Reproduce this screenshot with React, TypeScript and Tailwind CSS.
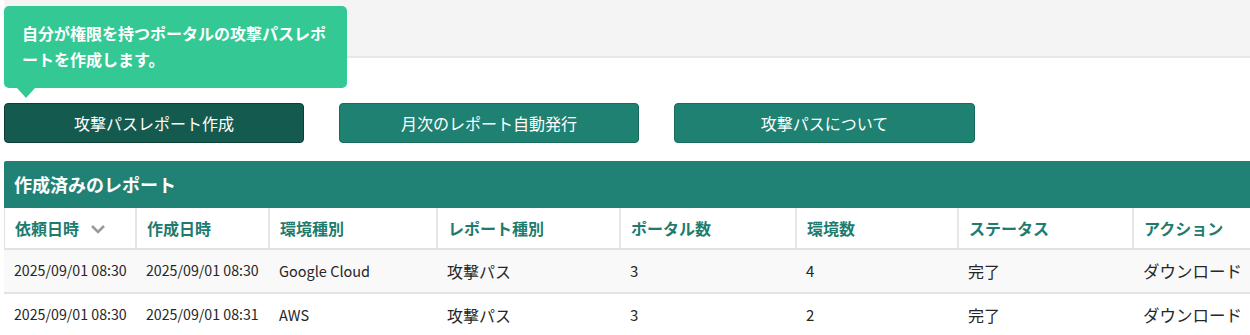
import React from "react";

const cols = [
  { label: "依頼日時", w: "w-[132px]", sort: true },
  { label: "作成日時", w: "w-[133px]" },
  { label: "環境種別", w: "w-[168px]" },
  { label: "レポート種別", w: "w-[183px]" },
  { label: "ポータル数", w: "w-[176px]" },
  { label: "環境数", w: "w-[162px]" },
  { label: "ステータス", w: "w-[175px]" },
  { label: "アクション", w: "w-[140px]" },
];

const sizes = [
  "text-[14.2px]",
  "text-[14.2px]",
  "text-[14.5px]",
  "text-[16px]",
  "text-[15px]",
  "text-[15px]",
  "text-[16px]",
  "text-[16.5px]",
];

const rows = [
  ["2025/09/01 08:30", "2025/09/01 08:30", "Google Cloud", "攻撃パス", "3", "4", "完了", "ダウンロード"],
  ["2025/09/01 08:30", "2025/09/01 08:31", "AWS", "攻撃パス", "3", "2", "完了", "ダウンロード"],
];

export default function App() {
  return (
    <div
      className="relative w-[1250px] h-[335px] overflow-hidden bg-white pl-[4px]"
      style={{ fontFamily: '"Noto Sans CJK JP", "Noto Sans", sans-serif' }}
    >
      <div className="h-[58px] bg-[#f4f4f4] border-b-2 border-[#e4e8ea]" />

      <div className="absolute left-[4px] top-[6px] w-[343px] h-[82px] rounded-[5px] bg-[#34c994] pl-[18px] pt-[14px] text-white font-bold text-[16px] leading-[26px]">
        自分が権限を持つポータルの攻撃パスレポ
        <br />
        ートを作成します。
        <div className="absolute left-[13px] top-[82px] w-0 h-0 border-l-[9px] border-r-[9px] border-t-[10px] border-l-transparent border-r-transparent border-t-[#34c994]" />
      </div>

      <div className="mt-[45px] flex gap-[35px] h-[40px]">
        <button className="w-[300px] h-[40px] rounded-[4px] bg-[#155a4e] border border-[#0e3f37] text-white text-[16px]">
          攻撃パスレポート作成
        </button>
        <button className="w-[300px] h-[40px] rounded-[4px] bg-[#1f8172] border border-[#186a5d] text-white text-[16px]">
          月次のレポート自動発行
        </button>
        <button className="w-[301px] h-[40px] rounded-[4px] bg-[#1f8172] border border-[#186a5d] text-white text-[16px]">
          攻撃パスについて
        </button>
      </div>

      <div className="mt-[18px]">
        <div className="h-[47px] bg-[#1f8274] flex items-center pl-[10px] text-white font-bold text-[18px] rounded-tl-[2px]">
          作成済みのレポート
        </div>
        <div className="flex h-[42px] border-b-2 border-[#e2e2e2] border-l border-l-[#e2e2e2]">
          {cols.map((c, i) => (
            <div
              key={i}
              className={`${c.w} shrink-0 flex items-center pl-[10px] text-[16px] font-bold text-[#1e7b6d] ${
                i < cols.length - 1 ? "border-r-2 border-[#e6e6e6]" : ""
              }`}
            >
              {c.label}
              {c.sort && (
                <svg className="ml-[11px] mt-[2px]" width="16" height="10" viewBox="0 0 16 10">
                  <path d="M2 2 L8 8 L14 2" fill="none" stroke="#9a9a9a" strokeWidth="2.6" />
                </svg>
              )}
            </div>
          ))}
        </div>
        {rows.map((r, ri) => (
          <div
            key={ri}
            className={`flex ${ri === 0 ? "h-[44px] bg-[#f9f9f9] border-b-2 border-[#e4e4e4]" : "h-[42px] bg-white"}`}
          >
            {r.map((v, ci) => (
              <div
                key={ci}
                className={`${cols[ci].w} shrink-0 flex items-center pl-[10px] text-[#262626] ${sizes[ci]}`}
              >
                {v}
              </div>
            ))}
          </div>
        ))}
      </div>
    </div>
  );
}
